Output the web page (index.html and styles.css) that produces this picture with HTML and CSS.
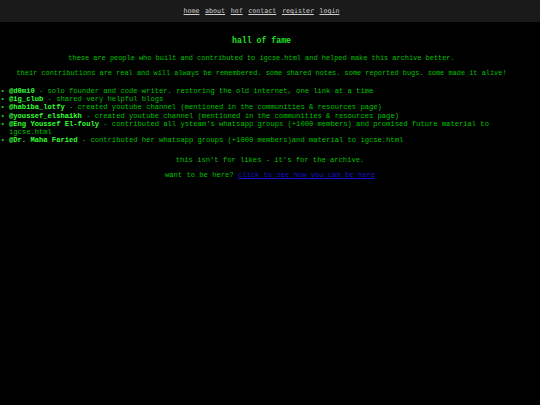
FILE: index.html
```html
<!DOCTYPE html>
<html>
<head>
<meta charset="utf-8">
<title>hall of fame</title>
<link rel="stylesheet" href="styles.css">
</head>
<body>
<header class="topbar">
  <nav class="nav">
    <a href="#">home</a>
    <a href="#">about</a>
    <a href="#">hof</a>
    <a href="#">contact</a>
    <a href="#">register</a>
    <a href="#">login</a>
  </nav>
</header>
<main class="content">
  <h1 class="title">hall of fame</h1>
  <p class="lead">these are people who built and contributed to igcse.html and helped make this archive better.</p>
  <p class="lead">their contributions are real and will always be remembered. some shared notes. some reported bugs. some made it alive!</p>
  <ul class="people">
    <li><b>@d0mi0</b> - solo founder and code writer. restoring the old internet, one link at a time</li>
    <li><b>@ig_club</b> - shared very helpful blogs</li>
    <li><b>@habiba_lotfy</b> - created youtube channel (mentioned in the communities &amp; resources page)</li>
    <li><b>@youssef_elshaikh</b> - created youtube channel (mentioned in the communities &amp; resources page)</li>
    <li><b>@Eng Youssef El-fouly</b> - contributed all ysteam's whatsapp groups (+1000 members) and promised future material to igcse.html</li>
    <li><b>@Dr. Maha Faried</b> - contributed her whatsapp groups (+1000 members)and material to igcse.html</li>
  </ul>
</main>
<section class="notes">
  <p class="note">this isn't for likes - it's for the archive.</p>
  <p class="note">want to be here? <a class="cta" href="#">click to see how you can be here</a></p>
</section>
</body>
</html>
```
FILE: styles.css
```css
html, body {
  margin: 0;
  padding: 0;
  background: #000;
}
body {
  font-family: "Liberation Mono", "Courier New", monospace;
  font-size: 7.15px;
  color: #00c000;
}
.topbar {
  background: #1a1a1a;
  height: 22px;
  display: flex;
  align-items: center;
  justify-content: center;
  padding-right: 17px;
}
.nav {
  display: flex;
  gap: 5.6px;
  font-family: "DejaVu Sans Mono", monospace;
  font-size: 6.65px;
}
.nav a {
  color: #cfcfcf;
  text-decoration: underline;
}
.content {
  padding-right: 17px;
}
.title {
  text-align: center;
  font-size: 8.2px;
  font-weight: bold;
  color: #22e022;
  margin: 14px 0 0;
  line-height: 10px;
}
.lead {
  text-align: center;
  font-size: 6.93px;
  line-height: 8px;
  margin: 8px 0 0;
}
.lead + .lead {
  margin-top: 7px;
}
.people {
  list-style-type: "\2022  ";
  margin: 10px 0 0;
  padding-left: 9px;
  line-height: 8.2px;
}
.people li::marker {
  color: #22d022;
}
.people b {
  color: #33ff33;
}
.notes {
  margin-top: 12px;
}
.note {
  text-align: center;
  line-height: 8px;
  margin: 0;
}
.note + .note {
  margin-top: 7px;
}
.cta {
  color: #1414c8;
}
```
